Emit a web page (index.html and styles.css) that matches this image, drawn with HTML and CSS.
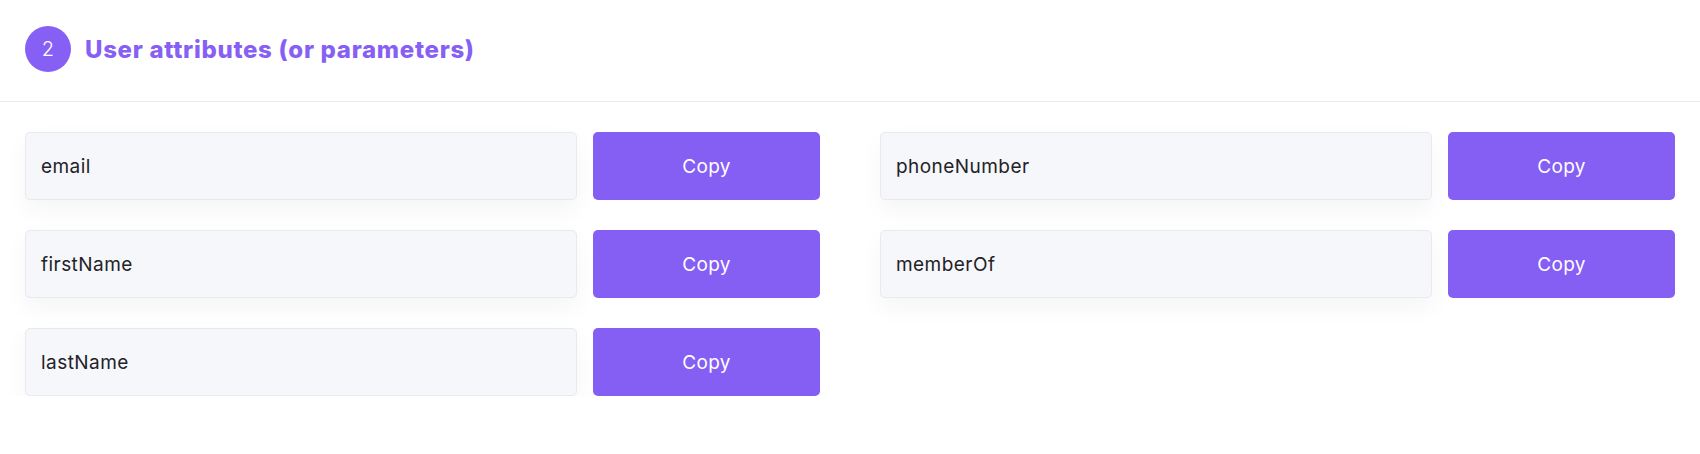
FILE: index.html
```html
<!DOCTYPE html>
<html lang="en">
<head>
<meta charset="utf-8">
<title>User attributes</title>
<link rel="stylesheet" href="styles.css">
</head>
<body>
<section class="panel">
  <header class="panel-head">
    <span class="step">2</span>
    <h2 class="title">User attributes (or parameters)</h2>
  </header>
  <div class="attrs">
    <div class="col">
      <div class="row"><div class="field">email</div><button class="copy">Copy</button></div>
      <div class="row"><div class="field">firstName</div><button class="copy">Copy</button></div>
      <div class="row"><div class="field">lastName</div><button class="copy">Copy</button></div>
    </div>
    <div class="col">
      <div class="row"><div class="field">phoneNumber</div><button class="copy">Copy</button></div>
      <div class="row"><div class="field">memberOf</div><button class="copy">Copy</button></div>
    </div>
  </div>
</section>
</body>
</html>
```
FILE: styles.css
```css
* { box-sizing: border-box; }
html, body { margin: 0; padding: 0; background: #fff; }
body { font-family: "Inter", "Noto Sans", sans-serif; color: #1f1f24; }

.panel-head {
  display: flex;
  align-items: center;
  gap: 14px;
  padding: 26px 25px 29px;
  border-bottom: 1px solid #ebebee;
}
.step {
  width: 46px;
  height: 46px;
  border-radius: 50%;
  background: #8660f4;
  color: #fff;
  display: flex;
  align-items: center;
  justify-content: center;
  font-size: 20px;
  font-weight: 300;
}
.title {
  margin: 0;
  font-size: 24px;
  font-weight: 800;
  color: #8660f4;
  letter-spacing: 0.7px;
}

.attrs {
  display: grid;
  grid-template-columns: 1fr 1fr;
  column-gap: 60px;
  padding: 30px 25px 0;
}
.col {
  display: flex;
  flex-direction: column;
  gap: 30px;
}
.row {
  display: flex;
  gap: 16px;
  height: 68px;
}
.field {
  flex: 1;
  display: flex;
  align-items: center;
  padding-left: 15px;
  background: #f6f7fa;
  border: 1px solid #e9e9ee;
  border-radius: 5px;
  box-shadow: 0 10px 24px rgba(0, 0, 0, 0.045);
  font-size: 19px;
  letter-spacing: 0.45px;
  color: #222228;
}
.copy {
  width: 227px;
  border: 0;
  border-radius: 5px;
  background: #855ef4;
  color: #fff;
  font-family: inherit;
  font-size: 19px;
  letter-spacing: 0.3px;
  cursor: pointer;
}
```
